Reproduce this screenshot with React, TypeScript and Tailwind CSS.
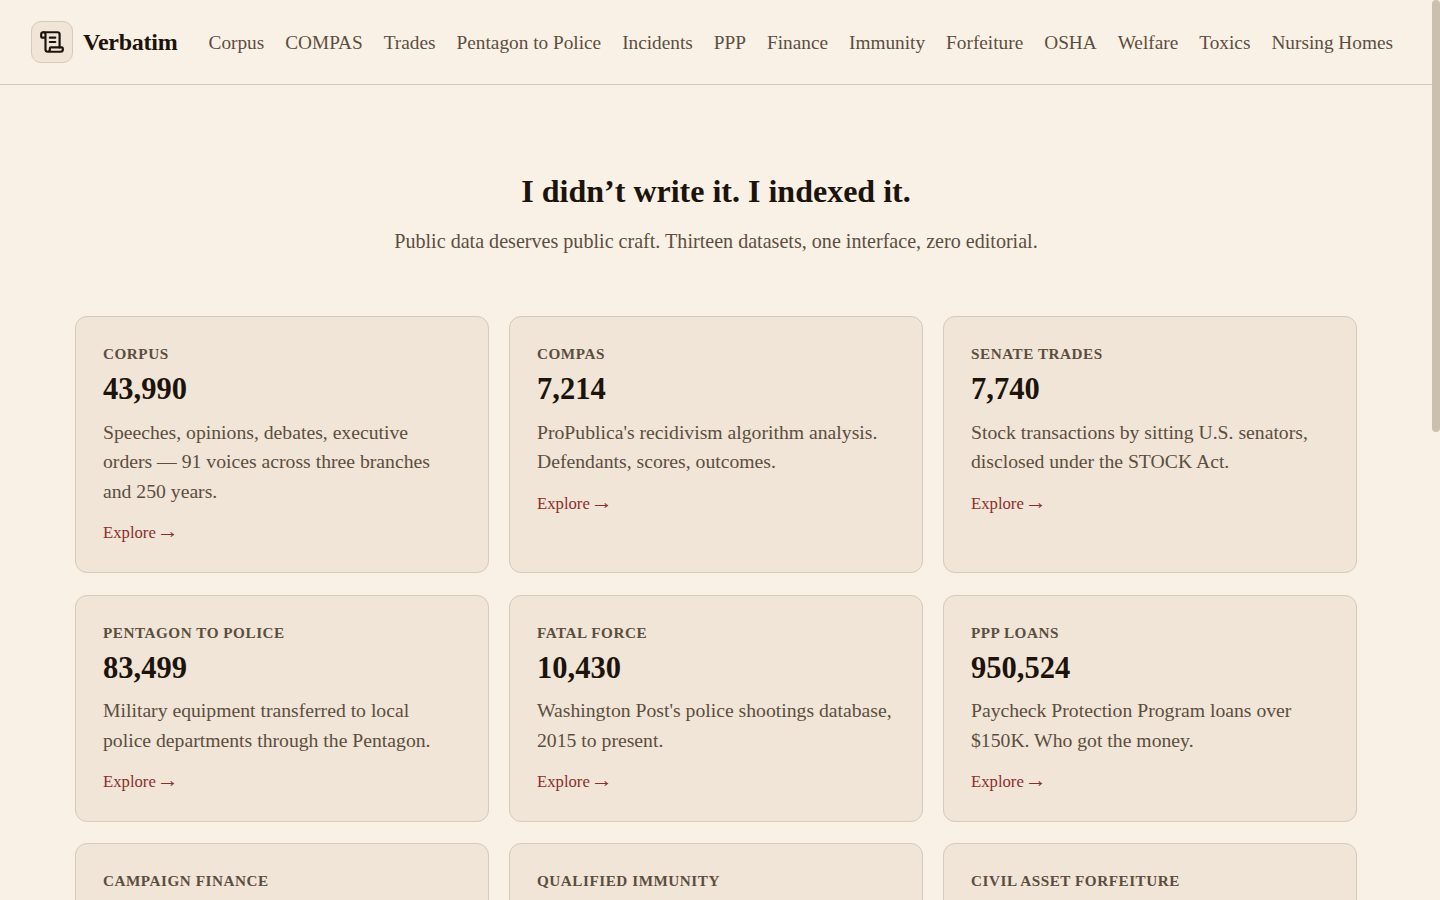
import React from 'react';
import { ScrollText } from 'lucide-react';

const navLinks = [
  'Corpus',
  'COMPAS',
  'Trades',
  'Pentagon to Police',
  'Incidents',
  'PPP',
  'Finance',
  'Immunity',
  'Forfeiture',
  'OSHA',
  'Welfare',
  'Toxics',
  'Nursing Homes',
];

const datasets = [
  { label: 'Corpus', count: '43,990', text: 'Speeches, opinions, debates, executive orders — 91 voices across three branches and 250 years.' },
  { label: 'COMPAS', count: '7,214', text: "ProPublica's recidivism algorithm analysis. Defendants, scores, outcomes." },
  { label: 'Senate Trades', count: '7,740', text: 'Stock transactions by sitting U.S. senators, disclosed under the STOCK Act.' },
  { label: 'Pentagon to Police', count: '83,499', text: 'Military equipment transferred to local police departments through the Pentagon.' },
  { label: 'Fatal Force', count: '10,430', text: "Washington Post's police shootings database, 2015 to present." },
  { label: 'PPP Loans', count: '950,524', text: 'Paycheck Protection Program loans over $150K. Who got the money.' },
  { label: 'Campaign Finance', count: '48,210', text: 'Federal contributions to candidates and committees, cycle by cycle.' },
  { label: 'Qualified Immunity', count: '5,525', text: 'Appellate decisions on the doctrine that shields officers from suit.' },
  { label: 'Civil Asset Forfeiture', count: '31,806', text: 'Property seized by law enforcement, state by state.' },
  { label: 'OSHA', count: '12,390', text: 'Workplace inspections, violations and penalties.' },
  { label: 'Welfare', count: '2,652', text: 'State-level benefit spending and caseloads over time.' },
  { label: 'Toxics', count: '21,104', text: 'Toxic releases reported by industrial facilities.' },
  { label: 'Nursing Homes', count: '14,870', text: 'Inspections, staffing and ratings for certified facilities.' },
];

function DatasetCard({ label, count, text }: { label: string; count: string; text: string }) {
  return (
    <div className="rounded-xl border border-[#d6cab8] bg-[#f0e5d6] px-[27px] pt-[26px] pb-[28px]">
      <div className="text-[15.2px] leading-[22px] font-bold uppercase tracking-[0.035em] text-[#5c4e3f]">{label}</div>
      <div className="mt-[6px] text-[30.5px] leading-[36px] font-bold text-[#1c140c]">{count}</div>
      <p className="mt-[10.5px] text-[19.7px] leading-[29.75px] text-[#5c4e3f]">{text}</p>
      <a className="mt-[13.5px] flex h-6 items-baseline text-[16.7px] leading-[24px] text-[#8b2e2e]">
        <span>Explore</span>
        <span className="ml-px text-[22px] leading-none">→</span>
      </a>
    </div>
  );
}

export default function App() {
  return (
    <div className="flex h-screen overflow-hidden bg-[#f9f1e5] font-['Liberation_Serif',serif]">
      <div className="min-w-0 flex-1">
        <header className="flex h-[85px] items-center border-b border-[#d4c8b6] pl-[31px]">
          <div className="flex items-center gap-[10px]">
            <div className="flex h-[42px] w-[42px] items-center justify-center rounded-[10px] border border-[#d6cab8] bg-[#f0e5d6]">
              <ScrollText className="h-[26px] w-[26px] text-[#1c140c]" strokeWidth={2} />
            </div>
            <span className="text-[24px] font-bold tracking-[-0.01em] text-[#1c140c]">Verbatim</span>
          </div>
          <nav className="ml-[31px] flex gap-[21px] pt-[2px]">
            {navLinks.map((link) => (
              <a key={link} className="text-[19.3px] text-[#5c4e3f]">
                {link}
              </a>
            ))}
          </nav>
        </header>

        <main className="mx-auto w-[1282px]">
          <section className="pt-[85px] text-center">
            <h1 className="text-[32px] leading-[42px] font-bold text-[#1c140c]">I didn’t write it. I indexed it.</h1>
            <p className="mt-[15px] text-[20.1px] leading-[28px] text-[#5c4e3f]">
              Public data deserves public craft. Thirteen datasets, one interface, zero editorial.
            </p>
          </section>
          <div className="mt-[61px] grid grid-cols-3 gap-x-5 gap-y-[21.25px]">
            {datasets.map((d) => (
              <DatasetCard key={d.label} {...d} />
            ))}
          </div>
        </main>
      </div>
      {/* scrollbar */}
      <div className="w-2 shrink-0">
        <div className="h-[432px] rounded-full bg-[#cbbfae]" />
      </div>
    </div>
  );
}
